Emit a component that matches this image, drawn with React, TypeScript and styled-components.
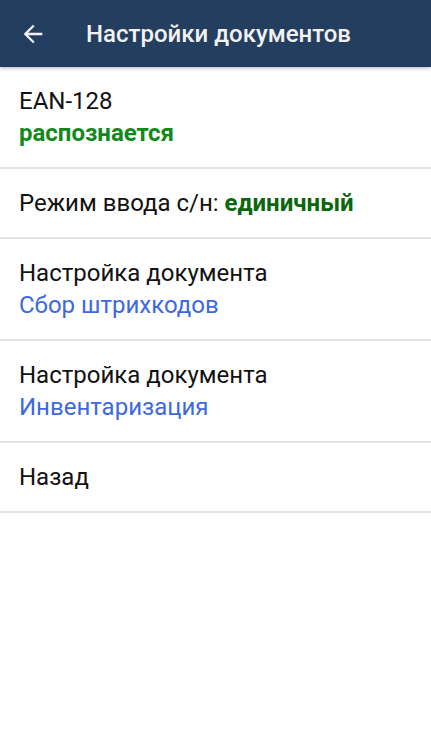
import React from "react";
import styled, { createGlobalStyle } from "styled-components";

const GlobalStyle = createGlobalStyle`
  html, body {
    margin: 0;
    padding: 0;
    background: #ffffff;
    font-family: Roboto, "Noto Sans", "Liberation Sans", sans-serif;
  }
`;

const Screen = styled.div`
  width: 431px;
  min-height: 739px;
  background: #ffffff;
  display: flex;
  flex-direction: column;
`;

const Toolbar = styled.header`
  position: relative;
  z-index: 1;
  height: 67px;
  background: #243e5f;
  display: flex;
  align-items: center;
  padding-left: 19px;
  box-shadow: 0 1px 4px rgba(0, 0, 0, 0.3);
`;

const BackButton = styled.button`
  width: 28px;
  height: 28px;
  padding: 0;
  border: none;
  background: transparent;
  color: #f2f2f2;
  display: flex;
  align-items: center;
  justify-content: center;
`;

const Title = styled.h1`
  margin: 0 0 0 39px;
  font-size: 24px;
  font-weight: 500;
  color: #f2f2f2;
`;

const List = styled.ul`
  list-style: none;
  margin: 0;
  padding: 0;
`;

const Row = styled.li`
  padding: 18px 19px;
  border-bottom: 2px solid #e2e2e2;
  font-size: 24px;
  line-height: 32px;
  color: #121212;
`;

const Line = styled.div``;

const Value = styled.span<{ $tone: "green" | "dark" | "blue" }>`
  color: ${(p) =>
    p.$tone === "green" ? "#11891b" : p.$tone === "dark" ? "#0b660e" : "#3d68e2"};
  font-weight: ${(p) => (p.$tone === "blue" ? 400 : 700)};
`;

const ArrowBack = () => (
  <svg width="28" height="28" viewBox="0 0 24 24" fill="currentColor">
    <path d="M20 11H7.83l5.59-5.59L12 4l-8 8 8 8 1.41-1.41L7.83 13H20v-2z" />
  </svg>
);

export default function App() {
  return (
    <Screen>
      <GlobalStyle />
      <Toolbar>
        <BackButton aria-label="Назад">
          <ArrowBack />
        </BackButton>
        <Title>Настройки документов</Title>
      </Toolbar>
      <List>
        <Row>
          <Line>EAN-128</Line>
          <Line>
            <Value $tone="green">распознается</Value>
          </Line>
        </Row>
        <Row>
          Режим ввода с/н: <Value $tone="dark">единичный</Value>
        </Row>
        <Row>
          <Line>Настройка документа</Line>
          <Line>
            <Value $tone="blue">Сбор штрихкодов</Value>
          </Line>
        </Row>
        <Row>
          <Line>Настройка документа</Line>
          <Line>
            <Value $tone="blue">Инвентаризация</Value>
          </Line>
        </Row>
        <Row>Назад</Row>
      </List>
    </Screen>
  );
}
